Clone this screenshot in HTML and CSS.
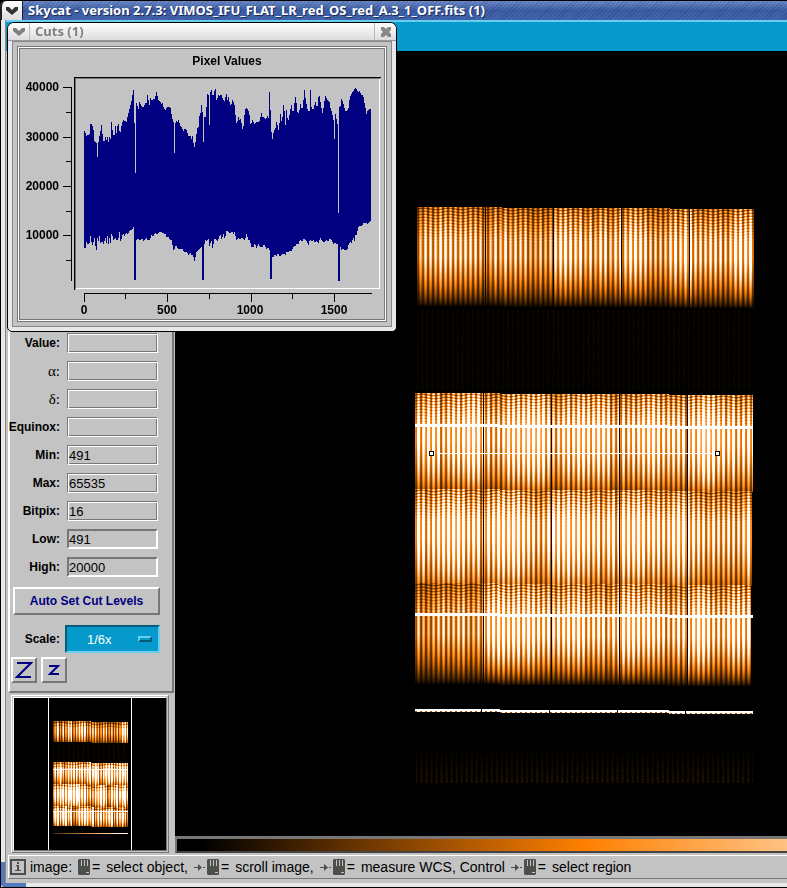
FILE: index.html
```html
<!DOCTYPE html>
<html lang="en">
<head>
    <meta charset="UTF-8">
    <meta name="viewport" content="width=device-width, initial-scale=1.0">
    <title>Skycat - version 2.7.3</title>
    <link rel="stylesheet" href="styles.css">
</head>
<body>
    <div class="window">
        <header class="titlebar">
            <button class="title-btn" type="button" aria-label="Window menu">
                <svg width="14" height="10" viewBox="0 0 14 10"><path d="M1 1h3l3 3 3-3h3v3L7 9 1 4z" fill="#333"/></svg>
            </button>
            <h1>Skycat - version 2.7.3: VIMOS_IFU_FLAT_LR_red_OS_red_A.3_1_OFF.fits (1)</h1>
        </header>

        <div class="client">
            <div class="menubar"></div>
            <main class="content">
                <div class="sidebar">
                    <form class="info-panel">
                        <div class="field"><label for="value">Value:</label><input id="value" type="text" readonly></div>
                        <div class="field"><label class="greek" for="alpha">α:</label><input id="alpha" type="text" readonly></div>
                        <div class="field"><label class="greek" for="delta">δ:</label><input id="delta" type="text" readonly></div>
                        <div class="field"><label for="equinox">Equinox:</label><input id="equinox" type="text" readonly></div>
                        <div class="field"><label for="min">Min:</label><input id="min" type="text" value="491" readonly></div>
                        <div class="field"><label for="max">Max:</label><input id="max" type="text" value="65535" readonly></div>
                        <div class="field"><label for="bitpix">Bitpix:</label><input id="bitpix" type="text" value="16" readonly></div>
                        <div class="field"><label for="low">Low:</label><input id="low" class="editable" type="text" value="491"></div>
                        <div class="field"><label for="high">High:</label><input id="high" class="editable" type="text" value="20000"></div>
                        <button class="cut-btn" type="button">Auto Set Cut Levels</button>
                        <div class="scale-row">
                            <label for="scale">Scale:</label>
                            <div class="scale-menu">
                                <select id="scale">
                                    <option>1/6x</option>
                                </select>
                            </div>
                        </div>
                        <div class="zoom-row">
                            <button type="button" aria-label="Zoom in">
                                <svg width="18" height="18" viewBox="0 0 18 18"><path d="M2 2h14L2 16h14" fill="none" stroke="#000080" stroke-width="2"/></svg>
                            </button>
                            <button type="button" aria-label="Zoom out">
                                <svg width="18" height="18" viewBox="0 0 18 18"><path d="M4 5h9L5 13h9" fill="none" stroke="#000080" stroke-width="2"/></svg>
                            </button>
                        </div>
                    </form>
                    <div class="panner"><canvas id="panner" width="152" height="152"></canvas></div>
                </div>
                <div class="viewer">
                    <canvas id="image" width="612" height="785"></canvas>
                    <div class="colorbar"></div>
                </div>
            </main>
            <footer class="status">
                <svg class="info-icon" width="16" height="16" viewBox="0 0 16 16"><path d="M1 1h14v14H1z" fill="none" stroke="#4d4d4d" stroke-width="2"/><path d="M7 3h2v2H7zM6 6h3v5h2v1H5v-1h2V7H6z" fill="#4d4d4d"/></svg>
                <span>image:</span>
                <svg class="mouse" width="12" height="16"><use href="#mouse"/></svg>
                <span class="equals">=</span>
                <span>select object,</span>
                <svg class="mouse" width="25" height="16"><use href="#drag"/></svg>
                <span class="equals">=</span>
                <span>scroll image,</span>
                <svg class="mouse" width="25" height="16"><use href="#drag"/></svg>
                <span class="equals">=</span>
                <span>measure WCS, Control</span>
                <svg class="mouse" width="25" height="16"><use href="#drag"/></svg>
                <span class="equals">=</span>
                <span>select region</span>
            </footer>
        </div>
    </div>

    <section class="cuts">
        <header class="cuts-title">
            <button type="button" aria-label="Window menu">
                <svg width="14" height="10" viewBox="0 0 14 10"><path d="M1 1h3l3 3 3-3h3v3L7 9 1 4z" fill="#808080"/></svg>
            </button>
            <h2>Cuts (1)</h2>
            <button class="close" type="button" aria-label="Close">
                <svg width="12" height="12" viewBox="0 0 12 12"><path d="M1 1h3l2 2 2-2h3v3L9 6l2 2v3H8L6 9l-2 2H1V8l2-2-2-2z" fill="#888"/></svg>
            </button>
        </header>
        <div class="cuts-body">
            <div class="graph">
                <h3>Pixel Values</h3>
                <svg class="plot" viewBox="20 73 364 246" shape-rendering="crispEdges">
                    <path d="M74.500 290V77.500H381" fill="none" stroke="#000"/>
                    <path d="M75.500 289V78.500H380" fill="none" stroke="#777"/>
                    <path d="M76 288.500H379.500V79" fill="none" stroke="#fff"/>
                    <path d="M71.500 87v194M63 87.500h9M63 137.500h9M63 186.500h9M63 235.500h9M66 112.500h6M66 161.500h6M66 211.500h6M66 260.500h6M84 293.500h288M84.500 293v9M167.500 293v9M251.500 293v9M334.500 293v9M125.500 293v6M209.500 293v6M292.500 293v6" fill="none" stroke="#000"/>
                    <g transform="translate(0 60) scale(.3333)">
                        <polygon fill="#000080" points="252,218 255,210 258,228 266,225 270,220 272,183 276,195 280,205 284,248 287,246 288,222 292,290 294,290 296,232 300,228 304,192 307,215 310,244 314,242 316,228 319,242 322,225 325,250 328,225 331,250 334,182 337,205 340,225 344,225 345,185 350,222 354,183 357,200 360,225 366,190 370,180 380,185 384,165 388,150 395,120 400,90 402,90 403,190 405,190 405,338 407,338 408,128 412,128 414,160 418,125 426,140 432,142 436,128 440,128 441,105 444,105 448,140 452,110 455,122 458,118 462,115 465,118 468,97 471,97 474,118 478,125 480,120 484,132 488,128 490,140 496,150 500,142 511,142 516,170 520,185 522,185 522,280 524,280 525,200 528,178 531,188 536,180 542,200 546,200 550,215 555,205 560,210 566,230 572,228 576,240 578,225 582,262 585,262 588,235 592,205 597,200 599,160 601,165 604,132 607,155 610,155 610,245 612,245 613,170 618,170 622,100 626,105 627,195 629,195 630,100 635,88 639,115 642,95 647,85 650,125 655,105 660,110 662,102 665,105 670,120 675,125 678,102 681,102 683,125 686,108 690,135 694,135 697,120 703,130 706,160 710,192 716,170 720,185 723,168 726,208 730,208 732,180 735,150 740,142 744,150 748,160 752,195 758,180 764,193 770,185 778,185 785,158 787,172 790,170 798,178 804,165 807,180 807,95 810,95 811,150 814,150 814,215 817,215 817,238 820,238 821,210 826,210 828,188 832,182 834,220 838,195 842,158 846,195 850,135 853,138 856,205 860,145 864,188 868,170 872,145 874,130 878,155 882,150 885,112 888,112 892,155 896,158 900,145 902,128 906,150 910,135 912,90 915,90 917,120 922,145 926,155 930,150 930,90 933,90 934,140 940,150 946,125 952,145 956,108 960,108 962,130 968,160 976,108 982,120 985,120 988,130 990,122 992,150 996,155 1000,180 1002,180 1002,237 1004,237 1005,155 1009,175 1014,200 1014,458 1017,458 1017,125 1020,155 1024,115 1030,130 1036,155 1042,150 1046,142 1050,110 1056,98 1060,95 1062,88 1066,82 1072,90 1074,98 1078,92 1084,105 1090,105 1092,120 1096,140 1100,165 1104,148 1107,150 1109,145 1113,150 1113,483 1106,487 1104,494 1100,489 1090,490 1086,498 1075,500 1070,526 1067,522 1064,545 1060,532 1055,550 1050,545 1046,555 1042,570 1038,568 1035,570 1030,566 1024,572 1020,555 1019,662 1014,662 1014,554 1010,552 1005,548 1000,552 994,540 990,535 985,545 980,540 970,548 965,540 960,532 957,550 950,542 945,548 940,540 936,545 930,538 925,558 920,542 912,535 906,545 900,540 896,552 890,550 886,560 882,558 875,574 868,572 865,578 860,574 856,586 852,580 845,585 840,590 834,578 830,588 824,585 819,592 815,592 815,656 810,656 810,572 805,562 800,567 795,560 792,550 788,562 780,560 775,552 770,566 765,550 760,562 754,560 750,540 745,540 740,522 735,540 725,533 720,540 715,532 710,542 704,515 700,525 698,515 690,520 685,515 680,512 676,530 672,535 670,515 666,542 662,525 658,528 654,545 650,540 646,535 642,540 639,565 637,565 634,538 629,562 626,535 620,545 617,538 612,560 611,660 606,660 606,560 600,565 594,570 588,580 585,602 582,602 580,588 575,585 572,580 565,584 560,575 552,577 548,568 540,568 532,565 528,552 524,568 520,572 515,540 510,540 505,530 500,532 496,522 490,520 484,515 478,517 474,522 465,520 460,530 455,525 450,538 444,542 440,535 436,538 431,545 427,535 420,540 414,535 408,540 407,660 402,660 402,498 395,510 390,508 384,525 378,518 374,528 370,520 366,530 363,548 360,538 358,508 355,542 350,538 348,545 345,525 342,552 339,530 334,522 331,557 328,530 325,558 323,525 320,552 317,530 315,556 312,530 310,562 306,535 304,552 300,545 298,522 295,548 292,530 290,575 288,550 286,560 283,528 279,558 275,548 270,520 268,560 264,545 262,557 259,545 257,563 252,563"/>
                    </g>
                    <g class="ticks" text-anchor="end">
                        <text x="59" y="91">40000</text>
                        <text x="59" y="141">30000</text>
                        <text x="59" y="190">20000</text>
                        <text x="59" y="239">10000</text>
                    </g>
                    <g class="ticks" text-anchor="middle">
                        <text x="84" y="314">0</text>
                        <text x="167" y="314">500</text>
                        <text x="250" y="314">1000</text>
                        <text x="334" y="314">1500</text>
                    </g>
                </svg>
            </div>
        </div>
    </section>

    <svg class="defs" width="0" height="0">
        <defs>
            <g id="mouse">
                <path d="M1 0h10l1 1v14l-1 1H1l-1-1V1z" fill="#4d4f4d"/>
                <path d="M3 1h1v6H3zM6 1h1v6H6zM9 1h1v6H9zM8 13h3v1H8z" fill="#c3c3c3"/>
            </g>
            <g id="drag">
                <path d="M0 8.500h6M9 8.500h2" fill="none" stroke="#4d4f4d"/>
                <path d="M4 5l4 3.500L4 12z" fill="#4d4f4d"/>
                <use href="#mouse" x="13"/>
            </g>
        </defs>
    </svg>
    <script src="script.js"></script>
</body>
</html>
```
FILE: styles.css
```css
* {
    box-sizing: border-box;
}
body {
    margin: 0;
    background-color: #000;
    color: #000;
    font-family: "Liberation Sans", Arial, sans-serif;
    font-size: 13px;
}
h1, h2, h3 {
    margin: 0;
}
button, input, select {
    font: inherit;
    color: inherit;
    margin: 0;
}
canvas, svg {
    display: block;
}
.defs {
    position: absolute;
}

/* Main window */
.window {
    position: relative;
    padding-bottom: 1px;
}
.titlebar {
    display: flex;
    height: 20px;
    border-top: 1px solid #000;
    border-radius: 6px 0 0 0;
    background: repeating-linear-gradient(135deg, rgba(0, 0, 40, 0.15) 0 1px, transparent 1px 3px), linear-gradient(#6e8ccb, #3d5ea5 50%, #4467b0);
}
.titlebar h1 {
    padding-left: 5px;
    color: #fff;
    font: bold 13px/18px "Noto Sans", sans-serif;
    text-shadow: 1px 1px #1c2c58;
    white-space: nowrap;
}
.title-btn {
    display: flex;
    align-items: center;
    justify-content: center;
    width: 23px;
    padding: 0;
    border: 1px solid #222;
    border-width: 0 1px 0 2px;
    border-radius: 6px 0 0 0;
    background: linear-gradient(#fff, #ddd);
}
.client {
    border: solid #e8e8e8;
    border-width: 0 0 4px 5px;
    box-shadow: inset 1px 0 #888;
    background-color: #c3c3c3;
    padding: 0 0 4px 3px;
}
.window::before {
    content: "";
    position: absolute;
    left: 0;
    top: 20px;
    bottom: 0;
    width: 1px;
    background: #000;
}
.window::after {
    content: "";
    position: absolute;
    left: 1px;
    bottom: 1px;
    width: 21px;
    height: 21px;
    border: solid #5577bb;
    border-width: 0 0 4px 4px;
    border-radius: 0 0 0 4px;
}
.menubar {
    height: 31px;
    margin-left: -2px;
    border-top: 2px solid #68ceee;
    background: #0699cc;
}
.content {
    display: flex;
}
.sidebar {
    display: flex;
    flex-direction: column;
    flex: none;
    width: 167px;
    padding-right: 1px;
}

/* Info panel */
.info-panel {
    display: flex;
    flex: 1;
    flex-direction: column;
    justify-content: flex-end;
    gap: 8px;
    padding: 0 14px 8px 0;
    border: 2px solid;
    border-color: #fff #777 #777 #fff;
}
.field, .scale-row {
    display: flex;
    align-items: center;
    justify-content: flex-end;
}
label {
    padding-right: 7px;
    font-size: 12px;
    font-weight: bold;
    white-space: nowrap;
}
.greek {
    font-family: "Liberation Serif", serif;
    font-size: 15px;
    font-weight: normal;
    line-height: 16px;
}
.field input {
    width: 91px;
    height: 20px;
    padding: 0 1px;
    border: 1px solid;
    border-color: #777 #fff #fff #777;
    background: #c3c3c3;
    box-shadow: inset 1px 1px #fff, inset -1px -1px #777;
}
.field input.editable {
    border-width: 2px;
    padding: 0;
    box-shadow: none;
}
.cut-btn {
    height: 28px;
    margin: 2px -2px 0 3px;
    padding: 0;
    border: 2px solid;
    border-color: #fff #777 #777 #fff;
    background: #c3c3c3;
    color: #000080;
    font-size: 12px;
    font-weight: bold;
}
.scale-row {
    margin: 2px -2px 0 0;
}
.scale-row label {
    padding-right: 5px;
}
.scale-menu {
    position: relative;
}
.scale-menu select {
    appearance: none;
    display: block;
    width: 95px;
    height: 28px;
    padding: 0 0 0 20px;
    border: 2px solid;
    border-color: #045c7a #68ceee #68ceee #045c7a;
    border-radius: 0;
    background: #0699cc;
    color: #fff;
}
.scale-menu::after {
    content: "";
    position: absolute;
    box-sizing: border-box;
    right: 8px;
    top: 11px;
    width: 14px;
    height: 6px;
    border: 2px solid;
    border-color: #68ceee #045c7a #045c7a #68ceee;
    pointer-events: none;
}
.zoom-row {
    display: flex;
    gap: 4px;
    margin-top: -4px;
    padding-left: 1px;
}
.zoom-row button {
    display: flex;
    align-items: center;
    justify-content: center;
    width: 26px;
    height: 26px;
    padding: 0;
    border: 2px solid;
    border-color: #fff #777 #777 #fff;
    background: #c3c3c3;
}
.panner {
    align-self: flex-start;
    margin: 2px 0 0 3px;
    border: 3px double;
    border-color: #fff #777 #777 #fff;
    background: #c3c3c3;
}

/* Image view */
.viewer {
    flex: 1;
    min-width: 0;
}
#image {
    width: 100%;
    background: #000;
}
.colorbar {
    height: 17px;
    border: solid #777;
    border-width: 3px 0 2px 2px;
    border-bottom-color: #444;
    background: linear-gradient(90deg, #000 4%, #ff8000 67%, #ffc284);
}

/* Status line */
.status {
    display: flex;
    align-items: center;
    height: 24px;
    margin-top: 2px;
    padding-bottom: 1px;
    border: solid;
    border-width: 1px 0 1px 1px;
    border-color: #fff #777 #777 #fff;
    font-size: 14px;
    white-space: nowrap;
}
.info-icon {
    margin: 0 4px 0 1px;
}
.mouse {
    flex: none;
    margin: 0 2px 0 6px;
}
.equals {
    margin-right: 6px;
}

/* Cuts dialog */
.cuts {
    position: absolute;
    left: 7px;
    top: 22px;
    width: 390px;
    border: 1px solid #000;
    border-radius: 7px 7px 5px 5px;
    background: #e8e8e8;
    padding: 0 4px 4px;
}
.cuts-title {
    display: flex;
    align-items: center;
    height: 18px;
    margin: 0 -4px;
    border-radius: 6px 6px 0 0;
    background: linear-gradient(#fff, #dcdcdc);
    border-bottom: 1px solid #999;
}
.cuts-title h2 {
    flex: 1;
    padding-left: 5px;
    color: #808080;
    font: bold 13px/17px "Noto Sans", sans-serif;
}
.cuts-title button {
    display: flex;
    align-items: center;
    justify-content: center;
    width: 22px;
    height: 17px;
    padding: 0;
    border: 0;
    border-right: 1px solid #bbb;
    background: none;
}
.cuts-title .close {
    border-right: 0;
    border-left: 1px solid #bbb;
}
.cuts-body {
    padding: 4px;
    border: 1px solid #888;
    background: #c3c3c3;
}
.graph {
    border: 3px double #777;
    outline: 1px solid #fff;
    outline-offset: -2px;
}
.graph h3 {
    height: 24px;
    padding-left: 50px;
    font-size: 12px;
    line-height: 25px;
    text-align: center;
}
.plot {
    width: 100%;
}
.ticks {
    font-size: 12px;
    font-weight: bold;
}
```
FILE: script.js
```js
// Small repeatable noise source so the frame looks the same on every load
function noise(n) {
    const s = Math.sin(n * 127.1 + 11.7) * 43758.5453;
    return s - Math.floor(s);
}

// Heat colour map: black -> orange -> white
function heat(v) {
    v = Math.max(0, Math.min(1, v));
    return [Math.min(255, v * 510), v * 255, Math.max(0, v * 510 - 255)];
}

// One row of fibre spectra, split in five modules with their own gain
function drawBand(img, band) {
    const segWidth = Math.ceil(band.w / 5);
    for (let i = 0; i < band.w; i++) {
        const top = band.y + Math.round(band.tilt * i / band.w);
        const seg = Math.floor(i / segWidth);
        const wave = 0.5 + 0.5 * Math.cos(2 * Math.PI * i / band.period + 2.4);
        const slow = 1 + 0.12 * Math.sin(i / 11 + seg + band.y);
        const gain = band.gain * band.modules[seg] * slow
            * (1 - band.spread / 2 + band.spread * noise(Math.floor(i / band.period) + band.y));
        for (let j = 0; j < band.h; j++) {
            const t = j / band.h;
            const rise = Math.min(1, 0.5 + t * 1.5);
            const fall = Math.min(1, band.floor + (1 - band.floor) * Math.pow((1 - t) * 2, 0.8));
            const fringe = t < 0.4 ? 1 + (0.4 - t) * Math.cos(j * 2.1 + Math.sin(i / 4) * 1.5) : 1;
            let v = rise * fall * gain * fringe * (0.3 + 0.76 * wave);
            if (band.seams && seg > 0 && i % segWidth === 0) {
                v = 0.02;
            }
            setPixel(img, band.x + i, top + j, v);
        }
    }
}

function setPixel(img, x, y, v) {
    const p = (y * img.width + x) * 4;
    const c = heat(v);
    img.data[p] = c[0];
    img.data[p + 1] = c[1];
    img.data[p + 2] = c[2];
    img.data[p + 3] = 255;
}

function drawFaint(img, x, y, w, h, level, ramp) {
    for (let i = 0; i < w; i++) {
        for (let j = 0; j < h; j++) {
            const v = level * (0.4 + 0.6 * Math.cos(i * 1.25)) * (0.5 + noise(i * 7 + j * 31));
            setPixel(img, x + i, y + j, ramp ? v * j / h : v);
        }
    }
}

function drawImage() {
    const canvas = document.getElementById('image');
    const ctx = canvas.getContext('2d');
    const img = ctx.createImageData(canvas.width, canvas.height);
    const base = { period: 5, tilt: 2, seams: true, floor: 0, spread: 0.3 };
    drawFaint(img, 242, 259, 336, 80, 0.02, false);
    drawBand(img, { ...base, x: 242, y: 156, w: 337, h: 99, gain: 1.05, modules: [0.95, 0.86, 1.05, 1.05, 1.08] });
    drawBand(img, { ...base, x: 240, y: 342, w: 338, h: 97, gain: 1.38, floor: 0.3, modules: [1.05, 1.05, 1, 0.95, 1.1] });
    drawBand(img, { ...base, x: 240, y: 438, w: 337, h: 95, gain: 1.35, floor: 0.4, modules: [1.05, 1.05, 1.08, 1.05, 0.88] });
    drawBand(img, { ...base, x: 240, y: 532, w: 336, h: 101, gain: 1.3, modules: [0.72, 1.08, 1, 1, 1.1] });
    drawFaint(img, 241, 694, 337, 38, 0.06, true);
    ctx.putImageData(img, 0, 0);

    // Bright sky lines, stepping down one pixel across the chip
    ctx.fillStyle = '#fff';
    for (let i = 0; i < 338; i++) {
        const drop = Math.round(i / 338 * 2);
        ctx.fillRect(240 + i, 373 + drop, 1, 3);
        ctx.fillRect(240 + i, 562 + drop, 1, 3);
        if (i % 68 !== 66) {
            ctx.fillRect(240 + i, 658 + drop, 1, 2);
            ctx.fillStyle = i % 5 < 2 ? '#b35a00' : '#fff';
            ctx.fillRect(240 + i, 660 + drop, 1, 1);
            ctx.fillStyle = '#fff';
        }
    }

    // Cut line with its two handles
    ctx.fillRect(262, 402, 276, 1);
    for (const x of [254, 540]) {
        ctx.fillStyle = '#000';
        ctx.fillRect(x, 400, 5, 5);
        ctx.fillStyle = '#fff';
        ctx.fillRect(x + 1, 401, 3, 3);
    }
}

function drawPanner() {
    const canvas = document.getElementById('panner');
    const ctx = canvas.getContext('2d');
    const img = ctx.createImageData(canvas.width, canvas.height);
    for (let p = 3; p < img.data.length; p += 4) {
        img.data[p] = 255;
    }
    const base = { x: 39, w: 75, tilt: 1, period: 2.7, seams: false, floor: 0.3, spread: 1, modules: [1, 1, 1, 1, 1] };
    drawFaint(img, 39, 46, 75, 18, 0.02, false);
    drawBand(img, { ...base, y: 23, h: 21, gain: 1.05 });
    drawBand(img, { ...base, y: 64, h: 22, gain: 1.6 });
    drawBand(img, { ...base, y: 86, h: 22, gain: 1.6 });
    drawBand(img, { ...base, y: 108, h: 20, gain: 1.5 });
    ctx.putImageData(img, 0, 0);
    ctx.fillStyle = '#fff';
    ctx.fillRect(39, 71, 75, 1);
    ctx.fillRect(39, 113, 75, 1);
    ctx.fillRect(34, 0, 1, 152);
    ctx.fillRect(117, 0, 1, 152);
    const line = ctx.createLinearGradient(39, 0, 114, 0);
    line.addColorStop(0, '#4d2600');
    line.addColorStop(0.6, '#ffb066');
    line.addColorStop(1, '#fff');
    ctx.fillStyle = line;
    ctx.fillRect(39, 135, 75, 1);
}

drawImage();
drawPanner();
```
